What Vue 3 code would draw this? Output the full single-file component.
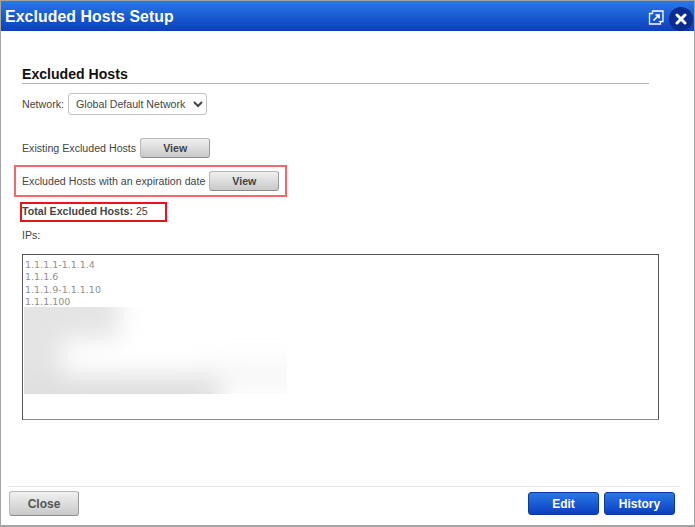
<script setup>
const ips = ['1.1.1.1-1.1.1.4', '1.1.1.6', '1.1.1.9-1.1.1.10', '1.1.1.100'];
</script>

<template>
  <div class="window">
    <header class="titlebar">
      <h1>Excluded Hosts Setup</h1>
      <div class="title-icons">
        <svg class="popout" width="16" height="16" viewBox="0 0 16 16">
          <path d="M4.500 1h10.500v10.500h-2.500v2.500h-11v-10.500h3z" fill="none" stroke="#fff" stroke-width="1.300" />
          <path d="M4.500 1.500v2.500M12.500 11.500h-2" fill="none" stroke="#cfe0ff" stroke-width="1" />
          <path d="M5.500 10.500l5-5M7.500 5h3.500v3.500" fill="none" stroke="#fff" stroke-width="1.700" />
        </svg>
        <button class="close-x" title="Close">
          <svg width="12" height="12" viewBox="0 0 12 12">
            <path d="M2 2l8 8M10 2l-8 8" stroke="#fff" stroke-width="3" stroke-linecap="round" />
          </svg>
        </button>
      </div>
    </header>

    <main class="content">
      <h2>Excluded Hosts</h2>

      <div class="network">
        <label>Network:</label>
        <select>
          <option>Global Default Network</option>
        </select>
      </div>

      <div class="row existing">
        <span>Existing Excluded Hosts</span>
        <button class="btn gray">View</button>
      </div>

      <div class="row expiry">
        <span>Excluded Hosts with an expiration date</span>
        <button class="btn gray">View</button>
      </div>

      <div class="total"><b>Total Excluded Hosts:</b> 25</div>

      <div class="ips-label">IPs:</div>

      <div class="ips">
        <div v-for="ip in ips" :key="ip">{{ ip }}</div>
        <div class="blur"></div>
      </div>
    </main>

    <footer class="footer">
      <button class="btn gray close">Close</button>
      <div class="actions">
        <button class="btn blue">Edit</button>
        <button class="btn blue">History</button>
      </div>
    </footer>
  </div>
</template>

<style>
html, body { margin: 0; background: #fff; }
</style>

<style scoped>
.window {
  box-sizing: border-box;
  width: 695px;
  height: 527px;
  display: flex;
  flex-direction: column;
  border: 1px solid #a3a3a3;
  border-bottom-width: 2px;
  background: #fff;
  font-family: "Liberation Sans", Arial, sans-serif;
  font-size: 10.650px;
  color: #444;
}

.titlebar {
  height: 30px;
  flex: none;
  display: flex;
  justify-content: space-between;
  padding: 0 0 0 4px;
  background: linear-gradient(#2a78e4, #0a3fc0);
}
.titlebar h1 {
  margin: 0;
  font-size: 15.800px;
  line-height: 31px;
  font-weight: bold;
  color: #fff;
  letter-spacing: 0.1px;
}
.title-icons { display: flex; align-items: flex-start; gap: 5px; }
.popout { margin-top: 9px; }
.close-x {
  width: 24px;
  height: 24px;
  margin-top: 6px;
  margin-right: 1px;
  padding: 0;
  border: 0;
  border-radius: 50%;
  background: #0a2b8f;
  display: flex;
  align-items: center;
  justify-content: center;
}

.content {
  flex: 1;
  padding: 35px 35px 0 21px;
}
h2 {
  margin: 0 10px 9px 0;
  padding-bottom: 1px;
  font-size: 14.100px;
  line-height: 16px;
  color: #111;
  border-bottom: 1px solid #b5b5b5;
}

.network { display: flex; align-items: center; gap: 4px; }
select {
  width: 139px;
  height: 22px;
  padding: 0 0 0 3px;
  border: 1px solid #c4c4c4;
  border-radius: 3px;
  background: #fff;
  font: 10.650px "Liberation Sans", Arial, sans-serif;
  color: #444;
}

.row { display: flex; align-items: center; gap: 4px; }
.existing { margin-top: 22px; height: 22px; }
.expiry {
  box-sizing: border-box;
  width: 273px;
  height: 32px;
  margin: 6px 0 0 -8px;
  padding-left: 6px;
  border: 2px solid #f4666b;
}

.total {
  box-sizing: border-box;
  width: 147px;
  height: 20px;
  margin: 5px 0 0 -2px;
  line-height: 14px;
  border: 2px solid #e8141c;
}
.ips-label { margin-top: 7px; line-height: 13px; }

.ips {
  box-sizing: border-box;
  position: relative;
  height: 166px;
  margin-top: 12px;
  padding: 4px 2px;
  border: 1px solid #555;
  border-color: #555 #555 #888 #555;
  font-family: "DejaVu Sans", sans-serif;
  font-size: 9.500px;
  line-height: 12.400px;
  color: #8f8f8f;
}
.blur {
  position: absolute;
  left: 1px;
  top: 52px;
  width: 263px;
  height: 87px;
  overflow: hidden;
}
.blur::before {
  content: "";
  position: absolute;
  inset: -30px;
  filter: blur(12px);
  background:
    linear-gradient(#dfdfdf, #dfdfdf) 0 98px / 225px 49px no-repeat,
    linear-gradient(#e4e4e4, #e4e4e4) 0 0 / 125px 62px no-repeat,
    linear-gradient(#e4e4e4, #e4e4e4) 0 0 / 68px 147px no-repeat,
    linear-gradient(#f8f8f8, #f8f8f8) 210px 82px / 110px 34px no-repeat;
}

.footer {
  flex: none;
  margin: 0 14px 0 8px;
  padding: 4px 5px 8px 0;
  height: 39px;
  box-sizing: border-box;
  border-top: 1px solid #e3e3e3;
  display: flex;
  justify-content: space-between;
  align-items: flex-start;
}
.actions { display: flex; gap: 5px; margin-top: 1px; }

.btn {
  width: 70px;
  height: 20px;
  padding: 0;
  border-radius: 3px;
  font: bold 10.650px "Liberation Sans", Arial, sans-serif;
}
.gray {
  border: 1px solid #b8b8b8;
  border-bottom-color: #8c8c8c;
  border-right-color: #9a9a9a;
  background: linear-gradient(#f0f0f0, #c9c9c9);
  color: #444;
}
.close {
  height: 25px;
  font-size: 12px;
  color: #555;
}
.blue {
  width: 71px;
  height: 23px;
  border: 1px solid #0a3a9e;
  background: linear-gradient(#2a78e4, #0a3fc0);
  color: #fff;
  font-size: 12px;
}
</style>
